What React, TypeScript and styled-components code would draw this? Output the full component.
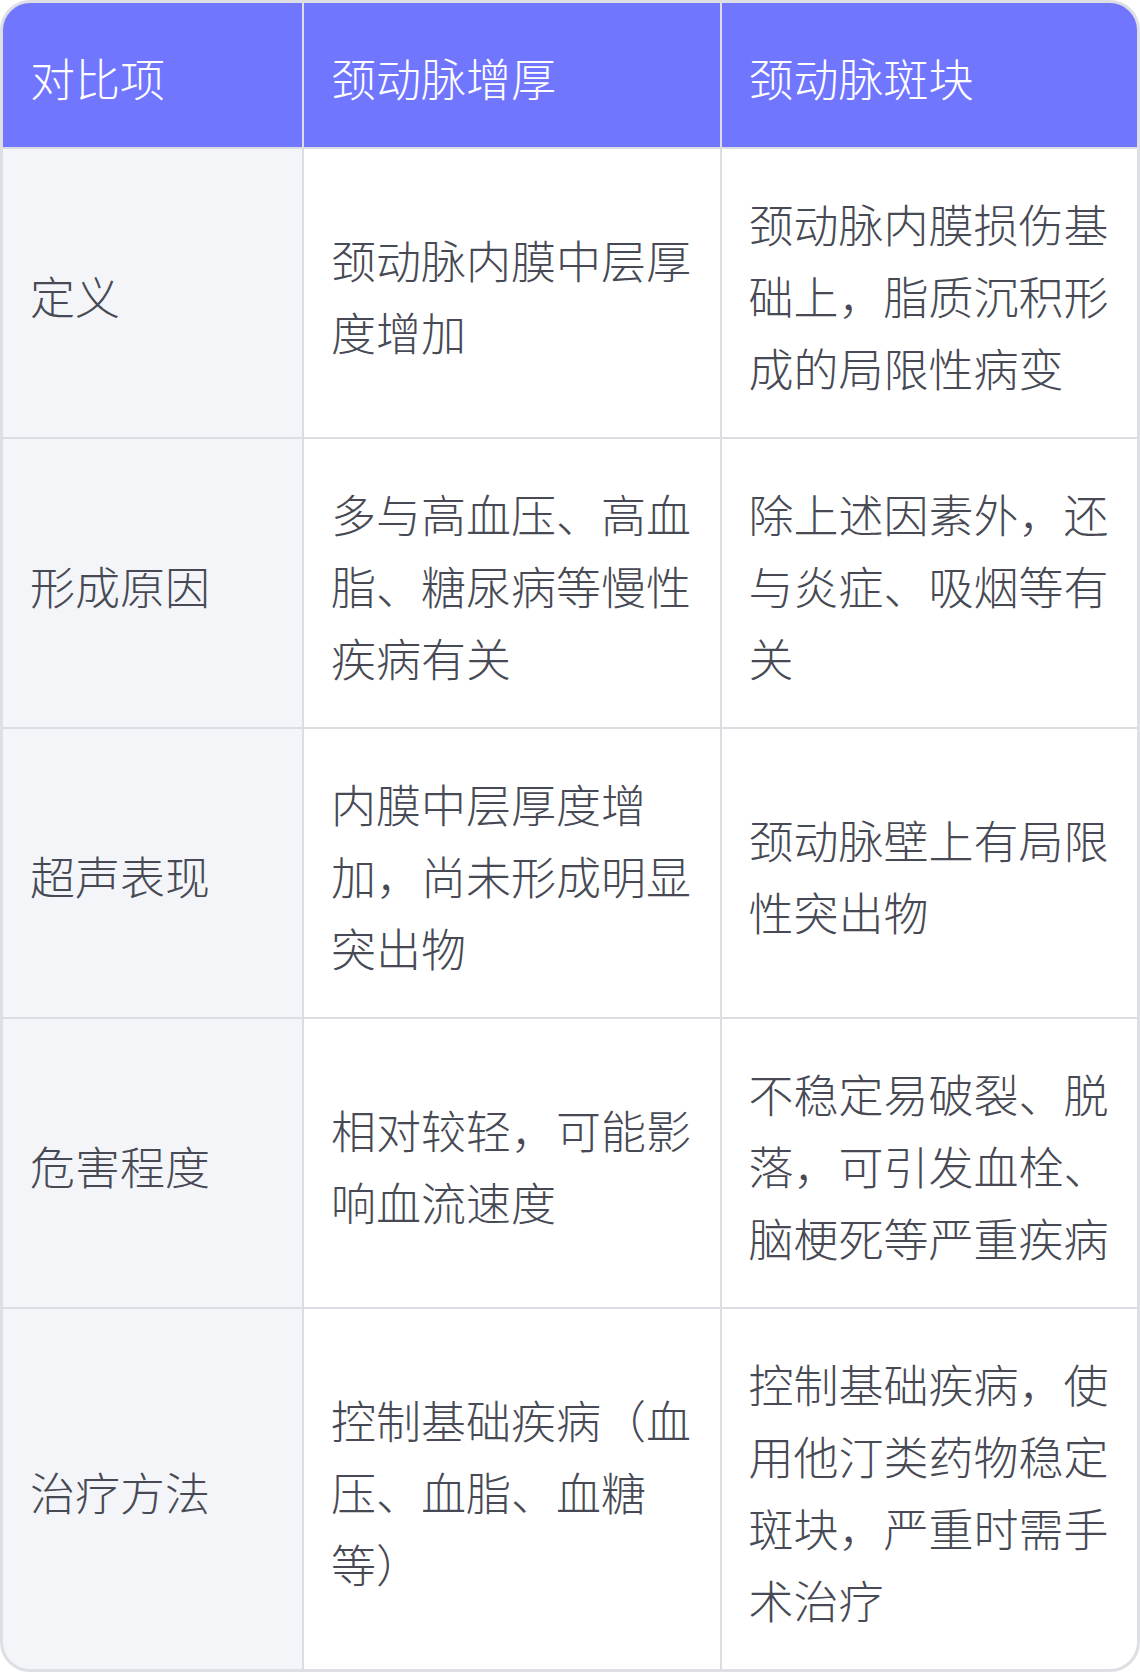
import React from "react";
import styled, { createGlobalStyle } from "styled-components";

const Global = createGlobalStyle`
  html, body { margin: 0; padding: 0; background: #ffffff; }
  body { font-family: "Noto Sans CJK SC", "Noto Sans", sans-serif; }
`;

const Table = styled.div`
  box-sizing: border-box;
  width: 1140px;
  border: 3px solid #dedfe4;
  border-radius: 30px;
  overflow: hidden;
  display: grid;
  grid-template-columns: 299px 1fr 1fr;
  gap: 2px;
  background: #dcdde3;
`;

const HeadCell = styled.div`
  background: #7176ff;
  color: #ffffff;
  font-size: 45px;
  font-weight: 300;
  line-height: 72px;
  padding: 39px 26px 33px 27px;
  display: flex;
  align-items: center;
`;

const Cell = styled.div<{ $label?: boolean }>`
  background: ${(p) => (p.$label ? "#f4f5f9" : "#ffffff")};
  color: #474a54;
  font-size: 45px;
  font-weight: 300;
  line-height: 72px;
  padding: 39px 26px 33px 27px;
  display: flex;
  align-items: center;
  word-break: break-all;
`;

const headers = ["对比项", "颈动脉增厚", "颈动脉斑块"];

const rows: [string, string, string][] = [
  ["定义", "颈动脉内膜中层厚度增加", "颈动脉内膜损伤基础上，脂质沉积形成的局限性病变"],
  ["形成原因", "多与高血压、高血脂、糖尿病等慢性疾病有关", "除上述因素外，还与炎症、吸烟等有关"],
  ["超声表现", "内膜中层厚度增加，尚未形成明显突出物", "颈动脉壁上有局限性突出物"],
  ["危害程度", "相对较轻，可能影响血流速度", "不稳定易破裂、脱落，可引发血栓、脑梗死等严重疾病"],
  ["治疗方法", "控制基础疾病（血压、血脂、血糖等）", "控制基础疾病，使用他汀类药物稳定斑块，严重时需手术治疗"],
];

export default function App() {
  return (
    <>
      <Global />
      <Table>
        {headers.map((h) => (
          <HeadCell key={h}>{h}</HeadCell>
        ))}
        {rows.map((r) => (
          <React.Fragment key={r[0]}>
            <Cell $label>{r[0]}</Cell>
            <Cell>{r[1]}</Cell>
            <Cell>{r[2]}</Cell>
          </React.Fragment>
        ))}
      </Table>
    </>
  );
}
